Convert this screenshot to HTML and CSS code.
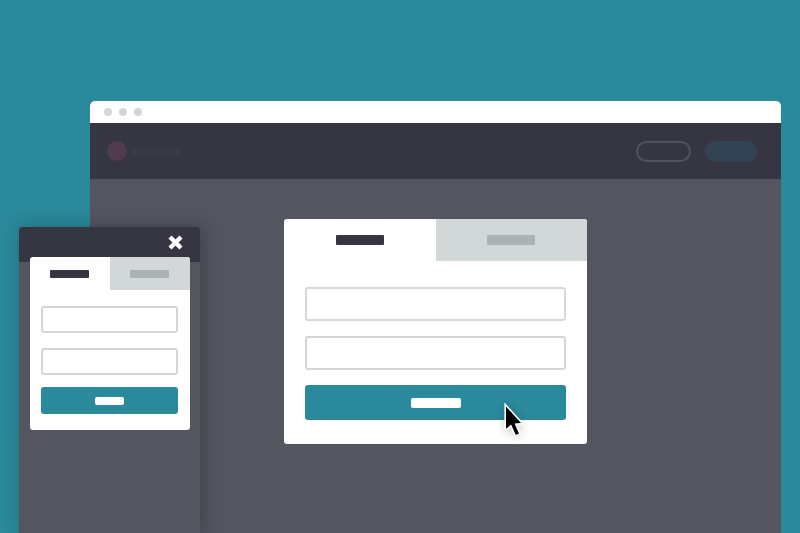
FILE: index.html
```html
<!DOCTYPE html>
<html lang="en">
<head>
    <meta charset="UTF-8">
    <meta name="viewport" content="width=device-width, initial-scale=1.0">
    <title>modal login</title>
    <link rel="stylesheet" href="styles.css">
</head>
<body>
    <div class="browser">
        <div class="browser-bar">
            <span class="dot"></span>
            <span class="dot"></span>
            <span class="dot"></span>
        </div>
        <header class="site-header">
            <span class="logo"></span>
            <span class="logo-name"></span>
            <button class="pill pill-outline" type="button" aria-label="Log in"></button>
            <button class="pill pill-solid" type="button" aria-label="Sign up"></button>
        </header>
        <main class="browser-page">
            <form class="modal">
                <div class="tabs">
                    <button class="tab" type="button" aria-label="Log in"><span class="bar"></span></button>
                    <button class="tab tab-inactive" type="button" aria-label="Sign up"><span class="bar"></span></button>
                </div>
                <div class="fields">
                    <input class="field" type="text" aria-label="Username">
                    <input class="field" type="password" aria-label="Password">
                    <button class="submit" type="button" aria-label="Submit"><span class="bar"></span></button>
                </div>
                <svg class="cursor" width="20" height="34" viewBox="0 0 20 34" aria-hidden="true">
                    <path d="M1.2 1.5 L1.2 27.5 L6.8 22.8 L11.4 33 L16 31 L11.8 21.2 L18.8 20.6 Z" fill="#000" stroke="#fff" stroke-width="1.6"/>
                </svg>
            </form>
        </main>
    </div>

    <div class="phone">
        <div class="phone-header">
            <button class="close" type="button" aria-label="Close">
                <svg width="15" height="15" viewBox="0 0 15 15" aria-hidden="true">
                    <path d="M2 2 L13 13 M13 2 L2 13" stroke="#fff" stroke-width="4.4"/>
                </svg>
            </button>
        </div>
        <form class="modal modal-small">
            <div class="tabs">
                <button class="tab" type="button" aria-label="Log in"><span class="bar"></span></button>
                <button class="tab tab-inactive" type="button" aria-label="Sign up"><span class="bar"></span></button>
            </div>
            <div class="fields">
                <input class="field" type="text" aria-label="Username">
                <input class="field" type="password" aria-label="Password">
                <button class="submit" type="button" aria-label="Submit"><span class="bar"></span></button>
            </div>
        </form>
    </div>
</body>
</html>
```
FILE: styles.css
```css
* {
    box-sizing: border-box;
}

body {
    display: flex;
    min-height: 100vh;
    margin: 0;
    padding: 101px 19px 0 90px;
    background-color: #2a899b;
    position: relative;
    overflow: hidden;
    font-family: "Open Sans", sans-serif;
}

button {
    border: 0;
    padding: 0;
    background: none;
    cursor: pointer;
}

/* desktop browser */
.browser {
    flex: 1;
    display: flex;
    flex-direction: column;
    border-radius: 5px 5px 0 0;
    background-color: #53555f;
    overflow: hidden;
}

.browser-bar {
    display: flex;
    align-items: center;
    gap: 7px;
    height: 22px;
    padding: 0 14px;
    background-color: #fff;
}

.dot {
    width: 8px;
    height: 8px;
    border-radius: 50%;
    background-color: #d2d7d6;
}

.site-header {
    display: flex;
    align-items: center;
    height: 56px;
    padding: 0 24px 0 17px;
    background-color: #353641;
}

.logo {
    width: 20px;
    height: 20px;
    border-radius: 50%;
    background-color: #503c4c;
}

.logo-name {
    width: 48px;
    height: 9px;
    margin-left: 5px;
    margin-right: auto;
    border-radius: 2px;
    background-color: #383a45;
}

.pill {
    width: 52px;
    height: 21px;
    border-radius: 11px;
}

.pill-outline {
    width: 55px;
    margin-right: 14px;
    border: 2px solid #50525c;
}

.pill-solid {
    background-color: #324353;
}

.browser-page {
    flex: 1;
    padding-top: 40px;
}

/* login modal */
.modal {
    width: 303px;
    margin: 0 auto;
    border-radius: 3px;
    background-color: #fff;
    position: relative;
}

.tabs {
    display: flex;
}

.tab {
    flex: 1;
    display: flex;
    align-items: center;
    justify-content: center;
    height: 42px;
}

.tab-inactive {
    border-radius: 0 3px 0 0;
    background-color: #d2d8d7;
}

.bar {
    width: 48px;
    height: 10px;
    border-radius: 1px;
    background-color: #353641;
}

.tab-inactive .bar {
    background-color: #a8b3b2;
}

.fields {
    display: flex;
    flex-direction: column;
    gap: 15px;
    padding: 26px 21px 24px;
}

.field,
.submit {
    width: 100%;
    height: 34px;
    border-radius: 3px;
}

.field {
    border: 2px solid #d2d8d9;
    background-color: #fff;
}

.submit {
    display: flex;
    align-items: center;
    justify-content: center;
    height: 35px;
    background-color: #2a899b;
}

.submit .bar {
    width: 50px;
    border-radius: 2px;
    background-color: #fff;
}

.cursor {
    position: absolute;
    right: 63px;
    bottom: 7px;
    overflow: visible;
    filter: drop-shadow(0 1px 5px rgba(0, 0, 0, 0.2));
}

/* phone in front of the browser */
.phone {
    width: 181px;
    position: absolute;
    left: 19px;
    top: 227px;
    bottom: 0;
    border-radius: 4px 4px 0 0;
    background-color: #53555f;
    box-shadow: 2px 0 18px rgba(0, 0, 0, 0.25);
}

.phone-header {
    display: flex;
    justify-content: flex-end;
    height: 35px;
    padding: 8px 17px 0;
    border-radius: 4px 4px 0 0;
    background-color: #353641;
}

.close {
    width: 15px;
    height: 15px;
}

.close svg {
    display: block;
}

.modal-small {
    width: 160px;
    margin-top: -5px;
}

.modal-small .tab {
    height: 33px;
}

.modal-small .bar {
    width: 39px;
    height: 8px;
}

.modal-small .fields {
    padding: 16px 12px 16px 11px;
}

.modal-small .field,
.modal-small .submit {
    height: 27px;
}

.modal-small .submit {
    margin-top: -3px;
}

.modal-small .submit .bar {
    width: 29px;
}
```
